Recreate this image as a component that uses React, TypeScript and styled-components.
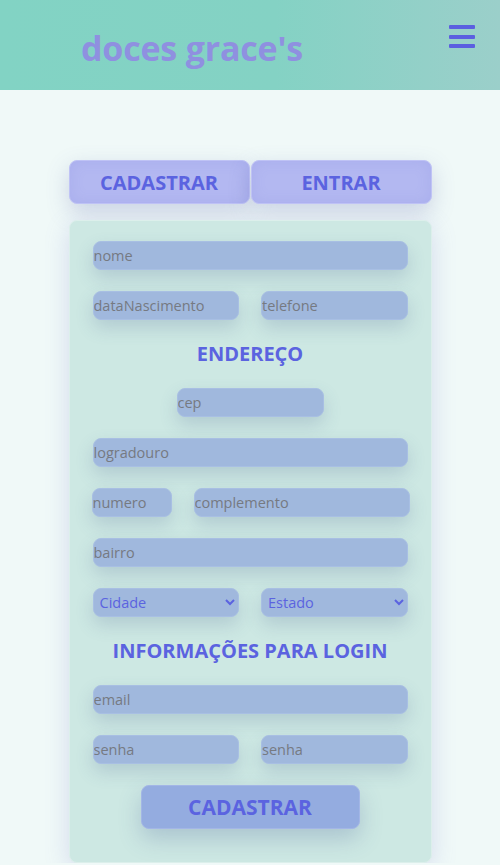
import React from 'react'
import styled, { createGlobalStyle } from 'styled-components'

const Global = createGlobalStyle`
    body {
        margin: 0;
        background: #f0f9f8;
        font-family: "Open Sans", "Noto Sans", sans-serif;
    }
`

const Header = styled.header`
    height: 90px;
    display: flex;
    align-items: center;
    justify-content: space-between;
    padding: 0 25px 0 81px;
    background: linear-gradient(90deg, #82d3c4 0%, #84d2c4 55%, #9bcfca 100%);
`

const Title = styled.h1`
    margin: 6px 0 0;
    font-size: 34px;
    font-weight: 700;
    color: #8f90e0;
    letter-spacing: -0.2px;
`

const Burger = styled.button`
    width: 26px;
    height: 23px;
    margin-top: -17px;
    padding: 0;
    border: 0;
    background: none;
    display: flex;
    flex-direction: column;
    justify-content: space-between;

    span {
        display: block;
        height: 4px;
        border-radius: 1px;
        background: #5b5fe0;
    }
`

const Main = styled.main`
    width: 363px;
    margin: 70px auto 0;
    display: flex;
    flex-direction: column;
    gap: 16px;
`

const Tabs = styled.div`
    display: flex;
    gap: 1px;
`

const Tab = styled.button`
    flex: 1;
    height: 44px;
    border: 1px solid #bfc3f5;
    border-radius: 8px;
    background: #b3b8f1;
    color: #5b63e0;
    font-family: inherit;
    font-size: 20px;
    font-weight: 700;
    box-shadow: 0 8px 22px rgba(90, 100, 170, 0.25), inset 0 0 14px rgba(120, 125, 220, 0.18);
`

const Card = styled.form`
    background: #cde8e3;
    border: 1px solid #dcefeb;
    border-radius: 8px;
    padding: 20px 23px 33px;
    display: flex;
    flex-direction: column;
    gap: 21px;
    box-shadow: 0 6px 24px rgba(110, 115, 200, 0.22);
`

const Row = styled.div<{ $cols?: string; $center?: boolean; $shift?: number }>`
    display: grid;
    grid-template-columns: ${p => p.$cols || '1fr 1fr'};
    gap: 22px;
    margin-left: ${p => p.$shift || 0}px;
    justify-content: ${p => (p.$center ? 'center' : 'stretch')};
`

const Field = styled.input`
    box-sizing: border-box;
    width: 100%;
    height: 29px;
    padding: 0;
    border: 1px solid #a8bfe3;
    border-radius: 8px;
    background: #a0b8dd;
    font-family: inherit;
    font-size: 14.5px;
    color: #555;
    outline: none;
    box-shadow: 0 8px 18px rgba(70, 90, 140, 0.2);

    &::placeholder {
        color: #767a82;
    }
`

const Select = styled.select`
    box-sizing: border-box;
    width: 100%;
    height: 29px;
    padding: 0 6px 0 2px;
    border: 1px solid #a8bfe3;
    border-radius: 8px;
    background: #a0b8dd;
    font-family: inherit;
    font-size: 14.5px;
    color: #5b63e0;
    outline: none;
    box-shadow: 0 8px 18px rgba(70, 90, 140, 0.2);
`

const Heading = styled.h2`
    margin: 0;
    height: 26px;
    line-height: 26px;
    text-align: center;
    font-size: 20px;
    font-weight: 700;
    color: #5b63e0;
`

const Submit = styled.button`
    align-self: center;
    width: 219px;
    height: 44px;
    border: 1px solid #a3b6e6;
    border-radius: 8px;
    background: #94ace0;
    color: #5b63e0;
    font-family: inherit;
    font-size: 21px;
    font-weight: 700;
    box-shadow: 0 10px 22px rgba(70, 90, 150, 0.25);
`

export default function App() {
    return (
        <>
            <Global />
            <Header>
                <Title>doces grace's</Title>
                <Burger aria-label="menu">
                    <span />
                    <span />
                    <span />
                </Burger>
            </Header>
            <Main>
                <Tabs>
                    <Tab>CADASTRAR</Tab>
                    <Tab>ENTRAR</Tab>
                </Tabs>
                <Card onSubmit={e => e.preventDefault()}>
                    <Field placeholder="nome" />
                    <Row>
                        <Field placeholder="dataNascimento" />
                        <Field placeholder="telefone" />
                    </Row>
                    <Heading>ENDEREÇO</Heading>
                    <Row $cols="147px" $center>
                        <Field placeholder="cep" />
                    </Row>
                    <Field placeholder="logradouro" />
                    <Row $cols="80px 216px" $shift={-1}>
                        <Field placeholder="numero" />
                        <Field placeholder="complemento" />
                    </Row>
                    <Field placeholder="bairro" />
                    <Row>
                        <Select defaultValue="">
                            <option value="">Cidade</option>
                        </Select>
                        <Select defaultValue="">
                            <option value="">Estado</option>
                        </Select>
                    </Row>
                    <Heading>INFORMAÇÕES PARA LOGIN</Heading>
                    <Field placeholder="email" />
                    <Row>
                        <Field placeholder="senha" type="password" />
                        <Field placeholder="senha" type="password" />
                    </Row>
                    <Submit type="submit">CADASTRAR</Submit>
                </Card>
            </Main>
        </>
    )
}
